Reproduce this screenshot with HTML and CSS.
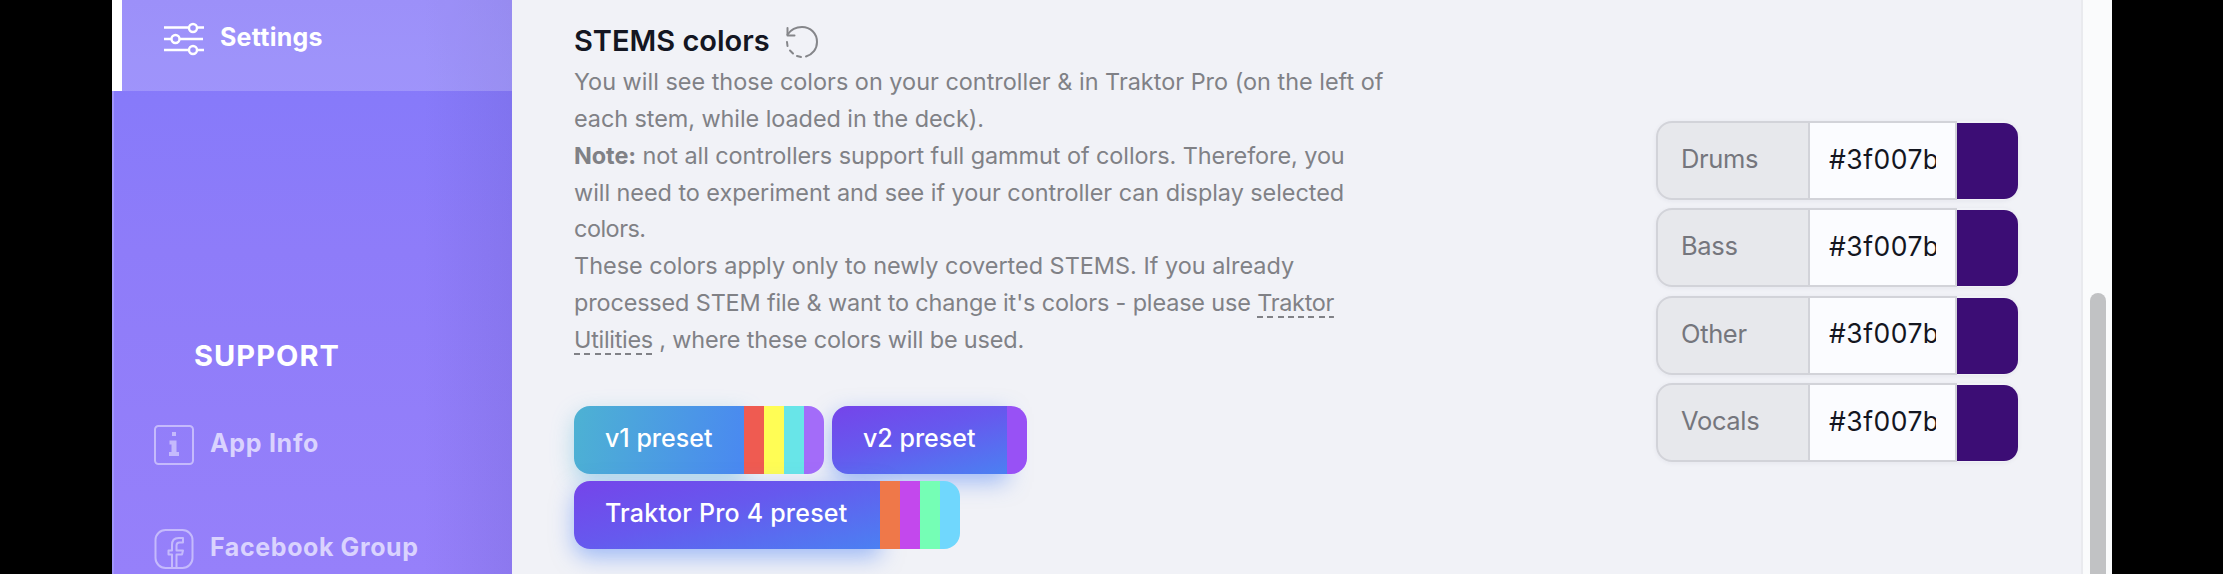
FILE: index.html
```
<!DOCTYPE html>
<html lang="en">
<head>
<meta charset="utf-8">
<title>Settings</title>
<link rel="stylesheet" href="styles.css">
</head>
<body>
<div class="window">
  <nav class="sidebar">
    <a class="nav-item active">
      <svg class="nav-icon" width="40" height="40" viewBox="0 0 40 40" fill="none" stroke="currentColor" stroke-width="2.400">
        <path d="M0 8.5h24.5M33.500 8.500H40M0 20h7M15.500 20H39M0 31h24.500M33.500 31H40"/>
        <circle cx="29" cy="9" r="4"/><circle cx="11.500" cy="20" r="4"/><circle cx="29" cy="31" r="4"/>
      </svg>
      <span class="nav-label settings-label">Settings</span>
    </a>
    <h2 class="nav-heading">SUPPORT</h2>
    <a class="nav-item">
      <svg class="nav-icon" width="40" height="40" viewBox="0 0 40 40" fill="none" stroke="currentColor" stroke-width="2">
        <rect x="1" y="1" width="38" height="38" rx="3.500"/>
        <path fill="currentColor" stroke="none" d="M18 7h4v4h-4zM15.500 15.500h7V27H25v4H15v-4h2.500v-7.500h-2z"/>
      </svg>
      <span class="nav-label info-label">App Info</span>
    </a>
    <a class="nav-item">
      <svg class="nav-icon" width="40" height="40" viewBox="0 0 40 40" fill="none" stroke="currentColor" stroke-width="2" stroke-linejoin="round">
        <rect x="1.500" y="1" width="37" height="38" rx="10"/>
        <path d="M18 39V25.500h-3.500v-4H18V16c0-4.500 2.500-7 6.500-7H29v4.500h-3.500c-2 0-3 1-3 3v5H29l-1 4h-5.500V39"/>
      </svg>
      <span class="nav-label group-label">Facebook Group</span>
    </a>
  </nav>
  <main class="content">
    <section class="description">
      <h1 class="title"><span>STEMS colors</span>
        <svg class="reset" width="34" height="34" viewBox="0 0 34 34" fill="none" stroke="currentColor" stroke-width="2" stroke-linecap="round" stroke-linejoin="round">
          <path d="M2.500 9.500C6 4.500 11 2 17 2c8.500 0 15 6.500 15 15 0 7-4.500 12.500-11 14.500"/>
          <path d="M2.500 3v7.500h7M2 17l.5 4M5 25.500l3 3M12 31l4 1"/>
        </svg>
      </h1>
      <p class="copy">
        <span class="line">You will see those colors on your controller &amp; in Traktor Pro (on the left of</span>
        <span class="line l2">each stem, while loaded in the deck).</span>
        <span class="line l3"><b>Note:</b> not all controllers support full gammut of collors. Therefore, you</span>
        <span class="line l4">will need to experiment and see if your controller can display selected</span>
        <span class="line l5">colors.</span>
        <span class="line">These colors apply only to newly coverted STEMS. If you already</span>
        <span class="line l7">processed STEM file &amp; want to change it's colors - please use <a class="link">Traktor</a></span>
        <span class="line l8"><a class="link">Utilities</a> , where these colors will be used.</span>
      </p>
      <div class="presets">
        <button class="preset"><span class="preset-name teal">v1 preset</span><i class="stripe red"></i><i class="stripe yellow"></i><i class="stripe cyan"></i><i class="stripe lilac"></i></button>
        <button class="preset"><span class="preset-name">v2 preset</span><i class="stripe violet"></i></button>
        <button class="preset"><span class="preset-name wide">Traktor Pro 4 preset</span><i class="stripe orange"></i><i class="stripe magenta"></i><i class="stripe mint"></i><i class="stripe sky"></i></button>
      </div>
    </section>
    <section class="colors">
      <div class="color-row"><span class="color-name">Drums</span><span class="color-field"><span class="color-value">#3f007b</span></span><span class="swatch"></span></div>
      <div class="color-row"><span class="color-name">Bass</span><span class="color-field"><span class="color-value">#3f007b</span></span><span class="swatch"></span></div>
      <div class="color-row"><span class="color-name">Other</span><span class="color-field"><span class="color-value">#3f007b</span></span><span class="swatch"></span></div>
      <div class="color-row"><span class="color-name">Vocals</span><span class="color-field"><span class="color-value">#3f007b</span></span><span class="swatch"></span></div>
    </section>
  </main>
  <div class="scroll-track"><div class="scroll-thumb"></div></div>
</div>
</body>
</html>
```
FILE: styles.css
```
* { box-sizing: border-box; }
body { margin: 0; background: #000; font-family: Inter, "Liberation Sans", sans-serif; overflow: hidden; }
.window { display: flex; height: 574px; margin: 0 111px 0 112px; overflow: hidden; background: #f1f2f7; }

.sidebar {
  width: 400px; height: 574px; flex: none; overflow: hidden; color: #fff;
  box-shadow: inset 2px 0 #a195fb;
  background:
    linear-gradient(90deg, rgba(90,80,180,0) 78%, rgba(90,80,180,.16) 100%),
    linear-gradient(180deg, #8475f8 0, #877afa 100px, #8e7cf9 250px, #9680fa 574px);
}
.nav-item { display: flex; align-items: center; gap: 16px; height: 104px; padding-left: 42px; }
.nav-item .nav-icon { flex: none; color: #c5bafc; }
.nav-label { padding-bottom: 4px; font-size: 25px; line-height: 30px; font-weight: 650; color: #dad3fe; white-space: nowrap; }
.nav-item.active { height: 91px; padding: 0 0 13px 42px; border-left: 10px solid #fff; background: rgba(255,255,255,.2); }
.active .nav-icon { color: #fff; }
.active .nav-label { color: #fff; }
.settings-label { letter-spacing: .25px; }
.info-label { letter-spacing: .7px; }
.group-label { letter-spacing: .6px; }
.nav-heading { margin: 245px 0 17px 82px; font-size: 29px; line-height: 40px; font-weight: 700; letter-spacing: 1.05px; }

.content { display: flex; justify-content: space-between; width: 1571px; padding: 18px 63px 0 62px; border-right: 2px solid #e9eaee; }
.description { width: 820px; }
.title { display: flex; align-items: center; gap: 15px; height: 45px; margin: 0; font-size: 29px; font-weight: 600; color: #141622; }
.reset { color: #85868a; margin-top: 2px; }
.copy { margin: 1px 0 47px; color: #808186; font-size: 23.45px; line-height: 36.86px; }
.line { display: block; white-space: nowrap; }
.copy b { font-weight: 700; }
.l2, .l3 { letter-spacing: -.07px; }
.l4 { letter-spacing: -.05px; }
.l5 { letter-spacing: -.5px; }
.l7, .l8 { letter-spacing: -.15px; }
.link { display: inline-block; height: 31px; line-height: 31px; letter-spacing: -.3px; background: repeating-linear-gradient(90deg, #808186 0 6px, transparent 6px 10.3px) bottom / 100% 2px no-repeat; }

.presets { display: flex; flex-wrap: wrap; gap: 7px 8px; width: 520px; }
.preset { display: flex; height: 68px; padding: 0; border: 0; border-radius: 16px; background: none; font-family: inherit; }
.preset-name {
  display: flex; align-items: center; height: 68px; width: 175px; padding: 0 0 4px 31px; border-radius: 16px 0 0 16px;
  font-size: 25px; font-weight: 550; color: #fff; white-space: nowrap;
  background: linear-gradient(165deg, #7544ea 0%, #6659ee 45%, #4b80f2 100%);
  box-shadow: 0 8px 22px rgba(76,130,246,.5);
}
.preset-name.teal { width: 170px; background: linear-gradient(100deg, #4db2d3, #4a88f1); box-shadow: 0 8px 22px rgba(76,178,215,.4); }
.preset-name.wide { width: 306px; letter-spacing: .2px; position: relative; }
.stripe { width: 20px; height: 68px; position: relative; }
.stripe:last-child { border-radius: 0 16px 16px 0; }
.red { background: #ef5b51; }
.yellow { background: #fffd55; }
.cyan { background: #68e5e8; }
.lilac { background: #a36cf9; }
.violet { background: #9851f5; }
.orange { background: #ef7849; }
.magenta { background: #c348ed; }
.mint { background: #75feb5; }
.sky { background: #70d7fd; }

.colors { display: flex; flex-direction: column; gap: 8.4px; width: 362px; padding-top: 103px; }
.color-row { display: flex; width: 362px; height: 79px; flex: none; border-radius: 16px; font-size: 25.5px; box-shadow: 0 1px 5px rgba(30,30,60,.06); background: #f1f2f7; }
.color-name { display: flex; align-items: center; width: 154px; padding: 0 0 4px 23px; border: 2px solid #d2d3d9; border-radius: 16px 0 0 16px; background: #e7e8ec; color: #75767d; letter-spacing: -.35px; }
.color-field { display: flex; align-items: center; width: 147px; padding: 0 19px 4px 19px; border: solid #d2d3d9; border-width: 2px 2px 2px 0; background: #fbfcff; color: #14161f; }
.color-value { width: 107px; overflow: hidden; font-size: 26.5px; letter-spacing: .5px; }
.swatch { width: 61px; height: 76px; margin-top: 2px; border-radius: 0 14px 14px 0; background: #3c0d75; }

.scroll-track { width: 29px; padding: 293px 6px 0 7px; background: #fafbfc; }
.scroll-thumb { width: 16px; height: 300px; border-radius: 8px; background: #c1c2c4; }
```
